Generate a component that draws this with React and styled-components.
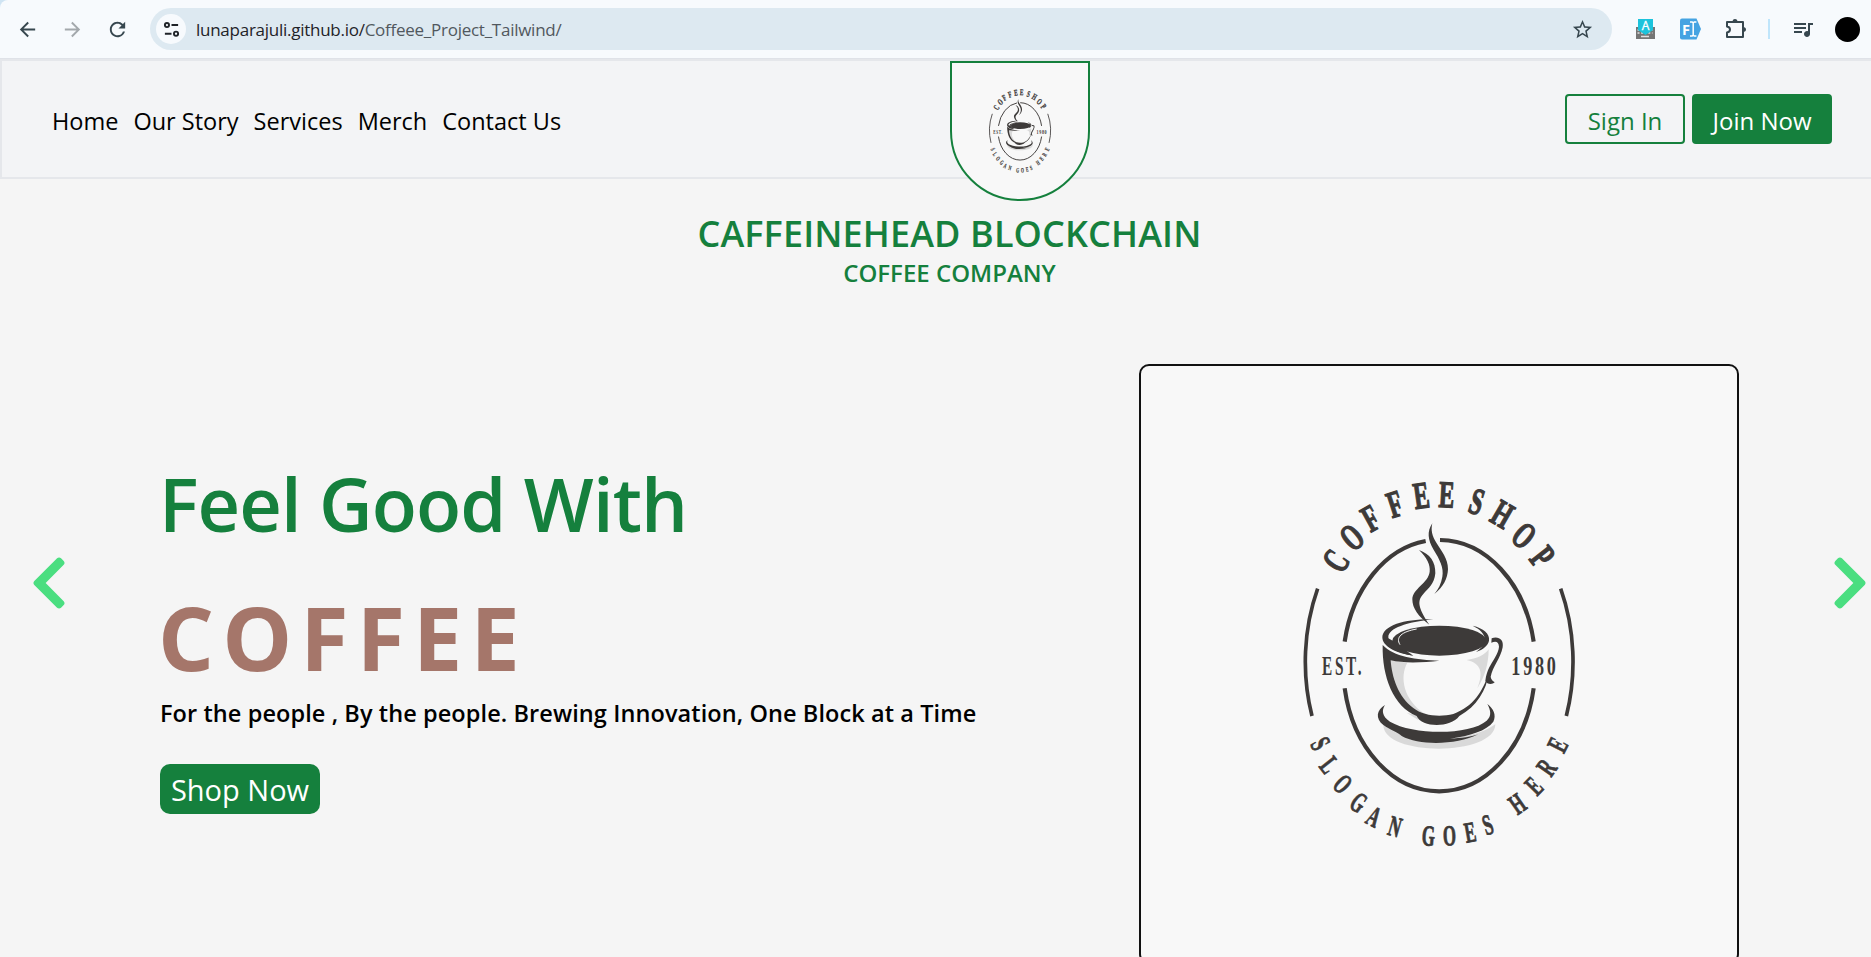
import React from 'react';
import styled, { createGlobalStyle } from 'styled-components';
import { MdArrowBack, MdArrowForward, MdRefresh, MdStarBorder, MdQueueMusic } from 'react-icons/md';
import { FaChevronLeft, FaChevronRight } from 'react-icons/fa';

const green = '#15803d';
const ink = '#3d3a39';

const GlobalStyle = createGlobalStyle`
  *, *::before, *::after { box-sizing: border-box; }
  body { margin: 0; background: #f5f5f5; color: #000; overflow: hidden;
    font-family: "Open Sans", "Noto Sans", sans-serif; }
`;

const Page = styled.div`display: flex; flex-direction: column; height: 957px; overflow: hidden;`;

const Corner = styled.div`background: #cfe4f3; flex: none;`;
const Toolbar = styled.div`
  display: flex; align-items: center; height: 59px; background: #f7fafd;
  border-top-left-radius: 8px; border-bottom: 1px solid #dfe2e8; padding: 0 11px 0 16px;
`;
const ToolButton = styled.span`
  display: flex; align-items: center; justify-content: center; width: 23px; flex: none;
  margin-right: ${p => p.$gap || 22}px; color: ${p => p.$color || '#37474f'};
`;
const UrlBar = styled.div`
  display: flex; align-items: center; width: 1462px; height: 42px; border-radius: 21px;
  background: #dde9f1; padding: 0 18px 0 6px; flex: none;
`;
const SiteInfo = styled.span`
  display: flex; align-items: center; justify-content: center; width: 30px; height: 30px;
  border-radius: 50%; background: #f7fafd; margin-right: 10px;
`;
const Url = styled.span`flex: 1; font-size: 17px; color: #1f2328; white-space: nowrap; letter-spacing: -0.26px;`;
const Path = styled.span`color: #51585e;`;
const Extension = styled.span`display: flex; flex: none; margin-left: ${p => p.$gap}px;`;
const Divider = styled.span`width: 2px; height: 20px; background: #bfe5fb;`;
const Avatar = styled.span`width: 25px; height: 25px; border-radius: 50%; background: #000;`;

const Header = styled.header`
  display: grid; grid-template-columns: 948px 140px 1fr; height: 120px; flex: none;
  background: #f3f4f6; border: 2px solid #e5e7eb; border-right: 0; align-items: start;
`;
const Nav = styled.nav`display: flex; gap: 15px; padding: 42px 0 0 50px;`;
const NavLink = styled.a`font-size: 23.5px; line-height: 36px; white-space: nowrap;`;
const Badge = styled.div`
  width: 140px; height: 140px; border: 2px solid ${green}; border-radius: 0 0 70px 70px;
  background: #f8f8f8; overflow: hidden; svg { display: block; }
`;
const Actions = styled.div`display: flex; justify-content: flex-end; gap: 7px; padding: 33px 39px 0 0;`;
const Button = styled.button`
  width: ${p => p.$w}px; height: 50px; padding: 3px 0 0; border: 2px solid ${green}; border-radius: 4px;
  background: ${p => (p.$solid ? green : 'transparent')}; color: ${p => (p.$solid ? '#fff' : green)};
  font: 400 24px/43px "Open Sans", "Noto Sans", sans-serif; white-space: nowrap;
`;

const Brand = styled.div`
  display: flex; flex-direction: column; align-items: center; padding: 33px 0 0 28px;
  color: ${green}; height: 185px; flex: none;
`;
const BrandName = styled.h1`margin: 0; font-size: 36px; line-height: 44px; font-weight: 600; letter-spacing: 0.12px;`;
const BrandSub = styled.h2`margin: 1px 0 0; font-size: 24px; line-height: 32px; font-weight: 600;`;

const Hero = styled.section`display: flex; align-items: flex-start; flex: 1; min-height: 0;`;
const Arrow = styled.span`display: flex; color: #4ade80; margin: 189px 0 0 ${p => p.$left}px; flex: none;`;
const Copy = styled.div`
  display: flex; flex-direction: column; align-items: flex-start; padding-top: 92px;
  width: 979px; margin-left: 81px; flex: none; white-space: nowrap;
`;
const Lead = styled.h2`
  margin: 0; font-size: 74px; line-height: 96px; font-weight: 600; color: ${green};
  letter-spacing: -0.9px; text-indent: -1px;
`;
const Product = styled.h2`
  margin: 35px 0 0; font-size: 88px; line-height: 100px; font-weight: 700; color: #a5766a;
  letter-spacing: 8.1px; text-indent: -2px;
`;
const Tagline = styled.p`margin: 10px 0 0; font-size: 23.5px; line-height: 32px; font-weight: 600; letter-spacing: 0.09px;`;
const Shop = styled.button`
  margin-top: 35px; width: 160px; height: 50px; padding: 2px 0 0; border: 0; border-radius: 10px; background: ${green};
  color: #fff; font: 400 29px/48px "Open Sans", "Noto Sans", sans-serif; white-space: nowrap;
`;
const Card = styled.div`
  width: 600px; height: 600px; border: 2px solid #111; border-radius: 10px; background: #f8f8f8;
  overflow: hidden; flex: none; svg { display: block; }
`;

const topLetters = [
  ['C', 168, 303, -57], ['O', 216, 232, -40], ['F', 272, 175, -29], ['F', 345, 133, -18], ['E', 424, 107, -8],
  ['E', 500, 104, 3], ['S', 590, 125, 18], ['H', 667, 163, 30], ['O', 732, 227, 40], ['P', 787, 291, 52],
];
const bottomLetters = [
  ['S', 121, 851, 62], ['L', 148, 915, 52], ['O', 188, 972, 45], ['G', 236, 1027, 35], ['A', 282, 1070, 27],
  ['N', 345, 1100, 16], ['G', 445, 1128, 4], ['O', 508, 1127, -2], ['E', 570, 1117, -10], ['S', 623, 1095, -18],
  ['H', 712, 1032, -35], ['E', 762, 978, -46], ['R', 800, 923, -55], ['E', 833, 855, -63],
];

const Glyph = ({ item: [ch, x, y, r], size, squeeze, weight }) => (
  <text
    transform={`translate(${x} ${y}) rotate(${r}) scale(${squeeze} 1)`} y={size * 0.33}
    fontSize={size} textAnchor="middle" stroke={ink} strokeWidth={weight}
  >{ch}</text>
);

const CoffeeLogo = ({ size }) => (
  <svg width={size} height={size} viewBox="2 2 596 596" fill={ink} fontFamily='"Liberation Serif", serif' fontWeight="700">
    <g transform="translate(141 96) scale(.33333)">
      {topLetters.map((l, i) => <Glyph key={i} item={l} size={113} squeeze={0.62} weight={4} />)}
      {bottomLetters.map((l, i) => <Glyph key={i} item={l} size={87} squeeze={0.58} weight={2.5} />)}
      <g fontSize="79">
        <text transform="translate(126 645) scale(.58 1)" letterSpacing="14">EST.</text>
        <text transform="translate(694 645) scale(.69 1)" letterSpacing="12">1980</text>
      </g>
      <g fill="none" stroke={ink} strokeWidth="11">
        <path d="M113 386A401 522 0 0 0 96 768M842 386A401 522 0 0 1 859 768" />
        <path strokeWidth="12.500" d="M194 545A288 375 0 0 1 437 243M480 240A288 375 0 0 1 761 545M194 685A288 375 0 0 0 761 685" />
      </g>
      <path d="M457 190C440 215 444 240 460 268C480 300 492 325 487 350C484 370 475 388 463 402C490 382 503 355 504 328C504 295 485 275 470 250C456 228 452 210 457 190Z" />
      <path d="M417 270C440 292 452 315 449 335C445 370 398 385 397 418C397 445 415 470 448 494C412 440 412 422 430 402C445 385 463 372 466 340C467 305 450 282 417 270Z" />
      <g transform="translate(270 450)">
        <path fill="#d9d9d9" d="M40 345C40 440 375 440 376 343C300 400 120 400 40 345Z" />
        <path fill="#d9d9d9" d="M60 150L112 158C88 200 100 270 165 312C100 290 64 225 60 150ZM290 150C335 160 340 190 322 235C345 200 356 160 356 118C345 135 320 146 290 150ZM110 308L145 330L150 318Z" />
        <path d="M190 28C110 26 38 45 37 82C37 108 75 130 130 137C85 122 55 105 55 82C55 55 110 36 190 28Z" />
        <path d="M55 85L68 92L130 137C85 130 50 112 45 95Z" />
        <ellipse cx="208" cy="92" rx="141" ry="45" />
        <path fill="none" stroke="#f8f8f8" strokeWidth="3" d="M140 57C95 65 76 82 90 104" />
        <path d="M308 47C340 55 360 70 357 92C354 107 340 118 318 126C338 112 346 100 345 88C343 70 330 58 308 47Z" />
        <path d="M38 105C36 200 70 290 140 318C155 353 240 355 268 318C320 290 350 240 356 190C338 245 310 290 250 312C210 322 160 318 130 294C85 262 65 200 62 151C100 160 160 158 208 152C140 150 70 140 38 105Z" />
        <path d="M365 85C385 78 402 88 398 112C392 145 368 170 362 200C364 212 370 212 374 217C365 226 350 222 346 212C348 195 352 185 358 172C366 155 386 130 387 110C386 95 378 92 364 98Z" />
        <path d="M45 285C20 300 15 325 40 345C60 360 85 368 95 378C150 408 260 405 325 373C310 380 270 385 240 386C300 378 350 362 370 335C380 315 370 295 352 282C362 300 366 318 350 332C300 376 130 376 60 335C35 318 35 300 45 285Z" />
      </g>
    </g>
  </svg>
);

const SiteIcon = () => (
  <svg width="17" height="17" viewBox="0 0 18 18" fill="none" stroke="#1f2328" strokeWidth="2">
    <circle cx="4.2" cy="4.3" r="2.2" /><path d="M9 4.3h7M2 13.5h7" /><circle cx="13.8" cy="13.5" r="2.2" />
  </svg>
);
const KeyboardIcon = () => (
  <svg width="20" height="22" viewBox="0 0 20 22">
    <path fill="#757575" d="M1 9h19v12H1z" />
    <path stroke="#e0e0e0" strokeWidth="1.6" strokeDasharray="2 1.6" d="M2.5 12h15M2.5 15h15" />
    <path stroke="#e0e0e0" strokeWidth="1.5" d="M6 18.500h8" />
    <path fill="#1cc3dc" d="M3 1h15v11l-7.500 5-7.500-5z" />
    <text x="10.500" y="11.5" fontSize="12" textAnchor="middle" fill="#fff" stroke="#fff" strokeWidth=".3">A</text>
  </svg>
);
const FontIcon = () => (
  <svg width="22" height="22" viewBox="0 0 22 22">
    <path fill="#45a3e2" d="M2 .5h14.500l4.500 10.500-4.500 10.500H2q-2 0-2-2V2.500q0-2 2-2z" />
    <text x="2" y="16.500" fontSize="14.5" fontWeight="700" fill="#fff">F</text>
    <path stroke="#fff" strokeWidth="1.5" fill="none" d="M10 4h2.200l1 1 1-1h2.200M10 18h2.200l1-1 1 1h2.200M13.200 5v12" />
  </svg>
);
const PuzzleIcon = () => (
  <svg width="22" height="22" viewBox="0 0 22 22">
    <path fill="none" stroke="#37474f" strokeWidth="2" strokeLinejoin="round" d="M2 4h16v15H2v-4.500q3-.5 3-3t-3-3z" />
    <path fill="#37474f" d="M7.500 4a2.500 3 0 0 1 5 0zM18 9a3 2.500 0 0 1 0 5z" />
  </svg>
);

const links = ['Home', 'Our Story', 'Services', 'Merch', 'Contact Us'];

export default function App() {
  return (
    <Page>
      <GlobalStyle />
      <Corner>
        <Toolbar>
          <ToolButton><MdArrowBack size={23} /></ToolButton>
          <ToolButton $color="#a3a8ac"><MdArrowForward size={23} /></ToolButton>
          <ToolButton $gap={21}><MdRefresh size={23} /></ToolButton>
          <UrlBar>
            <SiteInfo><SiteIcon /></SiteInfo>
            <Url>lunaparajuli.github.io/<Path>Coffeee_Project_Tailwind/</Path></Url>
            <MdStarBorder size={23} color="#37474f" />
          </UrlBar>
          <Extension $gap={23}><KeyboardIcon /></Extension>
          <Extension $gap={25}><FontIcon /></Extension>
          <Extension $gap={23}><PuzzleIcon /></Extension>
          <Extension $gap={21}><Divider /></Extension>
          <Extension $gap={21}><MdQueueMusic size={24} color="#37474f" /></Extension>
          <Extension $gap={20}><Avatar /></Extension>
        </Toolbar>
      </Corner>
      <Header>
        <Nav>{links.map(n => <NavLink key={n}>{n}</NavLink>)}</Nav>
        <Badge><CoffeeLogo size={136} /></Badge>
        <Actions><Button $w={120}>Sign In</Button><Button $w={140} $solid>Join Now</Button></Actions>
      </Header>
      <Brand><BrandName>CAFFEINEHEAD BLOCKCHAIN</BrandName><BrandSub>COFFEE COMPANY</BrandSub></Brand>
      <Hero>
        <Arrow $left={19}><FaChevronLeft size={60} /></Arrow>
        <Copy>
          <Lead>Feel Good With</Lead>
          <Product>COFFEE</Product>
          <Tagline>For the people , By the people. Brewing Innovation, One Block at a Time</Tagline>
          <Shop>Shop Now</Shop>
        </Copy>
        <Card><CoffeeLogo size={596} /></Card>
        <Arrow $left={81}><FaChevronRight size={60} /></Arrow>
      </Hero>
    </Page>
  );
}
